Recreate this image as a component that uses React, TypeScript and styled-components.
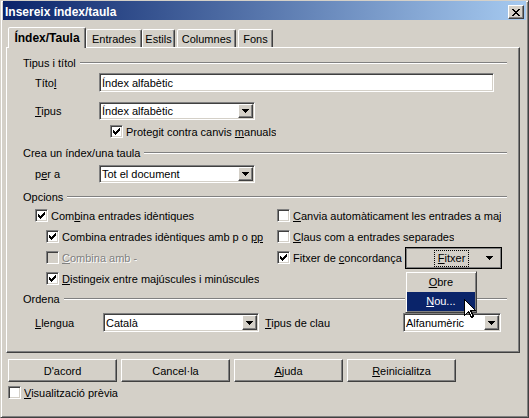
import React from "react";
import styled, { createGlobalStyle, css } from "styled-components";

const GlobalStyle = createGlobalStyle`
  html, body {
    margin: 0;
    padding: 0;
    background: #d4d0c8;
  }
  body {
    font-family: "Liberation Sans", Arial, sans-serif;
    font-size: 11px;
    color: #000;
  }
  * {
    box-sizing: border-box;
  }
`;

const raised = css`
  border: 1px solid;
  border-color: #ffffff #404040 #404040 #ffffff;
  box-shadow: inset -1px -1px #808080, inset 1px 1px #d4d0c8;
`;

const sunken = css`
  border: 1px solid;
  border-color: #808080 #ffffff #ffffff #808080;
  box-shadow: inset 1px 1px #404040, inset -1px -1px #d4d0c8;
`;

const Window = styled.div`
  width: 529px;
  height: 418px;
  background: #d4d0c8;
  border: 1px solid;
  border-color: #d4d0c8 #404040 #404040 #d4d0c8;
  box-shadow: inset 1px 1px #ffffff, inset -1px -1px #808080;
  padding: 0 2px 2px;
  display: flex;
  flex-direction: column;
`;

const TitleBar = styled.div`
  height: 19px;
  padding: 3px 2px 0 2px;
  background: linear-gradient(to right, #0a246a, #a6caf0);
  display: flex;
  align-items: center;
  justify-content: space-between;
`;

const TitleText = styled.span`
  color: #fff;
  font-weight: bold;
  font-size: 12px;
  line-height: 14px;
`;

const CloseButton = styled.div`
  ${raised};
  width: 16px;
  height: 14px;
  background: #d4d0c8;
  display: flex;
  align-items: center;
  justify-content: center;
  padding-right: 1px;
`;

const Content = styled.div`
  padding: 7px 6px 0 3px;
  display: flex;
  flex-direction: column;
`;

const TabStrip = styled.div`
  height: 20px;
  padding-left: 2px;
  display: flex;
  align-items: flex-end;
`;

const Tab = styled.div<{ $active?: boolean; $w: number; $ml?: number }>`
  width: ${(p) => p.$w}px;
  height: ${(p) => (p.$active ? 21 : 18)}px;
  margin-bottom: ${(p) => (p.$active ? -1 : 0)}px;
  margin-left: ${(p) => p.$ml ?? 0}px;
  border: 1px solid;
  border-bottom: none;
  border-color: #ffffff #404040 transparent #ffffff;
  border-radius: 2px 2px 0 0;
  box-shadow: inset -1px 0 #808080;
  background: #d4d0c8;
  display: flex;
  align-items: center;
  justify-content: center;
  font-weight: ${(p) => (p.$active ? "bold" : "normal")};
  font-size: ${(p) => (p.$active ? 12 : 11)}px;
  white-space: nowrap;
  position: relative;
  z-index: ${(p) => (p.$active ? 2 : 0)};
`;

const Panel = styled.div`
  height: 306px;
  width: 514px;
  border: 1px solid;
  border-color: #ffffff #404040 #404040 #ffffff;
  box-shadow: inset -1px -1px #808080;
  padding: 8px 12px 0 16px;
  display: flex;
  flex-direction: column;
`;

const Legend = styled.div<{ $mt?: number }>`
  height: 14px;
  margin-top: ${(p) => p.$mt ?? 0}px;
  display: flex;
  align-items: center;
  gap: 4px;
  white-space: nowrap;

  &::after {
    content: "";
    flex: 1;
    height: 0;
    border-top: 1px solid #808080;
    border-bottom: 1px solid #ffffff;
  }
`;

const FieldRow = styled.div<{ $mt?: number }>`
  margin-top: ${(p) => p.$mt ?? 0}px;
  margin-left: 12px;
  display: grid;
  grid-template-columns: 64px auto;
  align-items: center;
  justify-content: start;
`;

const SortRow = styled.div<{ $mt?: number }>`
  margin-top: ${(p) => p.$mt ?? 0}px;
  margin-left: 12px;
  display: grid;
  grid-template-columns: 68px 156px 144px 98px;
  align-items: center;
`;

const SortLabel = styled.span`
  padding-left: 6px;
`;

const Mnemonic = styled.span`
  text-decoration: underline;
  text-underline-offset: 1px;
`;

const TextBox = styled.input`
  ${sunken};
  width: 395px;
  height: 19px;
  background: #fff;
  font: inherit;
  color: #000;
  padding: 0 2px;
  margin: 0;
  outline: none;
`;

const Combo = styled.div<{ $w: number; $h?: number }>`
  ${sunken};
  width: ${(p) => p.$w}px;
  height: ${(p) => p.$h ?? 18}px;
  background: #fff;
  padding: 1px;
  display: flex;
  align-items: stretch;
`;

const ComboText = styled.span`
  flex: 1;
  min-width: 0;
  display: flex;
  align-items: center;
  padding-left: 1px;
  white-space: nowrap;
  overflow: hidden;
`;

const DropButton = styled.span`
  ${raised};
  width: 15px;
  flex: none;
  background: #d4d0c8;
  display: flex;
  align-items: center;
  justify-content: center;
`;

const CheckRow = styled.label<{ $indent?: number; $mt?: number; $h?: number }>`
  height: ${(p) => p.$h ?? 21}px;
  margin-top: ${(p) => p.$mt ?? 0}px;
  padding-left: ${(p) => p.$indent ?? 0}px;
  display: flex;
  align-items: center;
  gap: 3px;
  min-width: 0;
  white-space: nowrap;
`;

const Box = styled.span<{ $disabled?: boolean }>`
  ${sunken};
  width: 13px;
  height: 13px;
  flex: none;
  background: ${(p) => (p.$disabled ? "#d4d0c8" : "#fff")};
  display: flex;
  align-items: center;
  justify-content: center;
`;

const CheckText = styled.span<{ $disabled?: boolean; $fixed?: boolean }>`
  min-width: 0;
  flex: ${(p) => (p.$fixed ? "none" : "0 1 auto")};
  overflow: hidden;
  color: ${(p) => (p.$disabled ? "#808080" : "#000")};
  text-shadow: ${(p) => (p.$disabled ? "1px 1px 0 #fff" : "none")};
`;

const OptionsGrid = styled.div<{ $mt?: number }>`
  margin-top: ${(p) => p.$mt ?? 0}px;
  margin-left: 12px;
  display: grid;
  grid-template-columns: 242px 224px;
  grid-auto-rows: 21px;
  align-items: center;
`;

const MenuAnchor = styled.div`
  position: relative;
  margin-left: auto;
  flex: none;
`;

const MenuButton = styled.div`
  width: 97px;
  height: 22px;
  border: 1px solid #000;
  box-shadow: inset 1px 1px #808080, inset -1px -1px #808080;
  background: #d4d0c8;
  display: flex;
  align-items: center;
  padding: 1px 8px 0 28px;
`;

const FocusText = styled.span`
  border: 1px dotted #000;
  padding: 1px 3px;
  line-height: 13px;
`;

const ArrowSlot = styled.span`
  margin-left: auto;
  display: flex;
`;

const Menu = styled.div`
  position: absolute;
  top: 24px;
  left: 0;
  width: 72px;
  border: 1px solid;
  border-color: #d4d0c8 #404040 #404040 #d4d0c8;
  box-shadow: inset 1px 1px #ffffff, inset -1px -1px #808080;
  background: #d4d0c8;
  padding: 1px;
  z-index: 5;
`;

const MenuItem = styled.div<{ $hot?: boolean }>`
  height: 19px;
  display: flex;
  align-items: center;
  justify-content: center;
  background: ${(p) => (p.$hot ? "#0a246a" : "transparent")};
  color: ${(p) => (p.$hot ? "#fff" : "#000")};
`;

const Pointer = styled.svg`
  position: absolute;
  left: 59px;
  top: 52px;
  z-index: 6;
`;

const ButtonRow = styled.div`
  margin-top: 6px;
  padding-left: 2px;
  display: flex;
  gap: 4px;
`;

const PushButton = styled.div`
  ${raised};
  width: 109px;
  height: 23px;
  background: #d4d0c8;
  display: flex;
  align-items: center;
  justify-content: center;
`;

const Glyph = styled.svg`
  display: block;
  flex: none;
`;

const PixelGlyph = ({ rows, color = "#000" }: { rows: string[]; color?: string }) => (
  <Glyph
    width={rows[0].length}
    height={rows.length}
    viewBox={`0 0 ${rows[0].length} ${rows.length}`}
    shapeRendering="crispEdges"
  >
    {rows.flatMap((r, y) =>
      r.split("").map((c, x) =>
        c === "X" ? <rect key={`${x}-${y}`} x={x} y={y} width={1} height={1} fill={color} /> : null
      )
    )}
  </Glyph>
);

const CHECK = ["......X", ".....XX", "X...XXX", "XX.XXX.", "XXXXX..", ".XXX...", "..X...."];
const CLOSE = ["XX....XX", ".XX..XX.", "..XXXX..", "...XX...", "..XXXX..", ".XX..XX.", "XX....XX"];
const ARROW = ["XXXXXXX", ".XXXXX.", "..XXX..", "...X..."];

const Check = ({
  checked,
  disabled,
  indent,
  mt,
  h,
  children,
}: {
  checked?: boolean;
  disabled?: boolean;
  indent?: number;
  mt?: number;
  h?: number;
  children: React.ReactNode;
}) => (
  <CheckRow $indent={indent} $mt={mt} $h={h}>
    <Box $disabled={disabled}>{checked && <PixelGlyph rows={CHECK} />}</Box>
    <CheckText $disabled={disabled}>{children}</CheckText>
  </CheckRow>
);

const Select = ({ w, h, children }: { w: number; h?: number; children: React.ReactNode }) => (
  <Combo $w={w} $h={h}>
    <ComboText>{children}</ComboText>
    <DropButton>
      <PixelGlyph rows={ARROW} />
    </DropButton>
  </Combo>
);

const tabs = [
  { name: "Índex/Taula", w: 78, ml: 0, active: true },
  { name: "Entrades", w: 56, ml: 0 },
  { name: "Estils", w: 33, ml: 0 },
  { name: "Columnes", w: 59, ml: 2 },
  { name: "Fons", w: 35, ml: 2 },
];

export default function App() {
  return (
    <>
      <GlobalStyle />
      <Window>
        <TitleBar>
          <TitleText>Insereix índex/taula</TitleText>
          <CloseButton>
            <PixelGlyph rows={CLOSE} />
          </CloseButton>
        </TitleBar>

        <Content>
          <TabStrip>
            {tabs.map((t) => (
              <Tab key={t.name} $active={t.active} $w={t.w} $ml={t.ml}>
                {t.name}
              </Tab>
            ))}
          </TabStrip>

          <Panel>
            <Legend>Tipus i títol</Legend>
            <FieldRow $mt={3}>
              <span>
                Títo<Mnemonic>l</Mnemonic>
              </span>
              <TextBox readOnly value="Índex alfabètic" />
            </FieldRow>
            <FieldRow $mt={10}>
              <span>
                <Mnemonic>T</Mnemonic>ipus
              </span>
              <Select w={156}>Índex alfabètic</Select>
            </FieldRow>
            <Check checked indent={87} mt={4} h={15}>
              Protegit contra canvis <Mnemonic>m</Mnemonic>anuals
            </Check>

            <Legend $mt={7}>Crea un índex/una taula</Legend>
            <FieldRow $mt={5}>
              <span>
                p<Mnemonic>e</Mnemonic>r a
              </span>
              <Select w={156}>Tot el document</Select>
            </FieldRow>

            <Legend $mt={7}>Opcions</Legend>
            <OptionsGrid $mt={1}>
              <Check checked>
                Com<Mnemonic>b</Mnemonic>ina entrades idèntiques
              </Check>
              <Check>
                <Mnemonic>C</Mnemonic>anvia automàticament les entrades a majúscules
              </Check>
              <Check checked indent={11}>
                Combina entrades idèntiques amb p o <Mnemonic>pp</Mnemonic>
              </Check>
              <Check>
                <Mnemonic>C</Mnemonic>laus com a entrades separades
              </Check>
              <Check disabled indent={11}>
                <Mnemonic>C</Mnemonic>ombina amb -
              </Check>
              <CheckRow>
                <Box>
                  <PixelGlyph rows={CHECK} />
                </Box>
                <CheckText $fixed>
                  Fitxer de <Mnemonic>c</Mnemonic>oncordança
                </CheckText>
                <MenuAnchor>
                  <MenuButton>
                    <FocusText>
                      <Mnemonic>F</Mnemonic>itxer
                    </FocusText>
                    <ArrowSlot>
                      <PixelGlyph rows={ARROW} />
                    </ArrowSlot>
                  </MenuButton>
                  <Menu>
                    <MenuItem>
                      <span>
                        <Mnemonic>O</Mnemonic>bre
                      </span>
                    </MenuItem>
                    <MenuItem $hot>
                      <span>
                        <Mnemonic>N</Mnemonic>ou...
                      </span>
                    </MenuItem>
                  </Menu>
                  <Pointer width="12" height="19" viewBox="0 0 12 19" shapeRendering="crispEdges">
                    <path
                      d="M0.5 0.5 L0.5 16.5 L4.5 12.5 L7.5 18.5 L9.5 17.5 L6.5 11.5 L11.5 11.5 Z"
                      fill="#fff"
                      stroke="#000"
                      strokeWidth="1"
                    />
                  </Pointer>
                </MenuAnchor>
              </CheckRow>
              <Check checked indent={11}>
                <Mnemonic>D</Mnemonic>istingeix entre majúscules i minúscules
              </Check>
            </OptionsGrid>

            <Legend $mt={3}>Ordena</Legend>
            <SortRow $mt={7}>
              <span>
                <Mnemonic>L</Mnemonic>lengua
              </span>
              <Select w={156} h={19}>
                Català
              </Select>
              <SortLabel>
                <Mnemonic>T</Mnemonic>ipus de clau
              </SortLabel>
              <Select w={98} h={19}>
                Alfanumèric
              </Select>
            </SortRow>
          </Panel>

          <ButtonRow>
            <PushButton>D'acord</PushButton>
            <PushButton>Cancel·la</PushButton>
            <PushButton>
              <span>
                <Mnemonic>A</Mnemonic>juda
              </span>
            </PushButton>
            <PushButton>
              <span>
                <Mnemonic>R</Mnemonic>einicialitza
              </span>
            </PushButton>
          </ButtonRow>

          <Check mt={3} h={15} indent={2}>
            <Mnemonic>V</Mnemonic>isualització prèvia
          </Check>
        </Content>
      </Window>
    </>
  );
}
